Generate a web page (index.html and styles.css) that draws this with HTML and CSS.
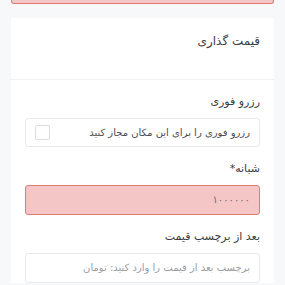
FILE: index.html
```html
<!DOCTYPE html>
<html lang="fa" dir="rtl">
<head>
    <meta charset="UTF-8">
    <meta name="viewport" content="width=device-width, initial-scale=1.0">
    <link rel="stylesheet" href="styles.css">
    <title>قیمت گذاری</title>
</head>
<body>
    <div class="alert"></div>
    <section class="card">
        <header class="card-header">
            <h3 class="card-title">قیمت گذاری</h3>
        </header>
        <div class="card-body">
            <div class="field">
                <label class="field-label">رزرو فوری</label>
                <label class="check-box">
                    <span>رزرو فوری را برای این مکان مجاز کنید</span>
                    <span class="check"></span>
                </label>
            </div>
            <div class="field">
                <label class="field-label">شبانه*</label>
                <div class="input input-error">۱۰۰۰۰۰۰</div>
            </div>
            <div class="field">
                <label class="field-label">بعد از برچسب قیمت</label>
                <div class="input input-placeholder">برچسب بعد از قیمت را وارد کنید: تومان</div>
            </div>
        </div>
    </section>
</body>
</html>
```

FILE: styles.css
```css
html{
    box-sizing: border-box;
    font-family: "DejaVu Sans", sans-serif;
    font-size: 12px;
}
*,
*:before,
*:after{
    box-sizing: inherit;
}
body{
    margin: 0;
    padding: 0 11px;
    background-color: #f7f8fa;
    color: #3a3d42;
}
.alert{
    height: 4px;
    background-color: #f5c6c6;
    border: 1px solid #e07a7a;
    border-top: none;
    border-radius: 0 0 3px 3px;
}
.card{
    margin-top: 14px;
    background-color: #fff;
}
.card-header{
    height: 62px;
    padding: 14px 14px 0;
    border-bottom: 1px solid #f0f1f3;
}
.card-title{
    margin: 0;
    font-size: 12px;
    font-weight: normal;
    line-height: 18px;
}
.card-body{
    padding: 14px 14px 0;
}
.field{
    margin-bottom: 14px;
}
.field-label{
    display: block;
    font-size: 11px;
    line-height: 16px;
    margin-bottom: 8px;
}
.check-box{
    display: flex;
    justify-content: space-between;
    align-items: center;
    height: 29px;
    padding: 0 9px;
    border: 1px solid #e9eaec;
    border-radius: 3px;
    font-size: 10px;
    color: #4a4d52;
}
.check{
    width: 15px;
    height: 15px;
    border: 1px solid #dcdde0;
    border-radius: 2px;
}
.input{
    height: 30px;
    line-height: 28px;
    padding: 0 9px;
    border: 1px solid #e9eaec;
    border-radius: 3px;
    font-size: 10px;
}
.input-error{
    background-color: #f5c6c6;
    border-color: #e07a7a;
    color: #6a6d72;
}
.input-placeholder{
    color: #9a9da3;
}
```
